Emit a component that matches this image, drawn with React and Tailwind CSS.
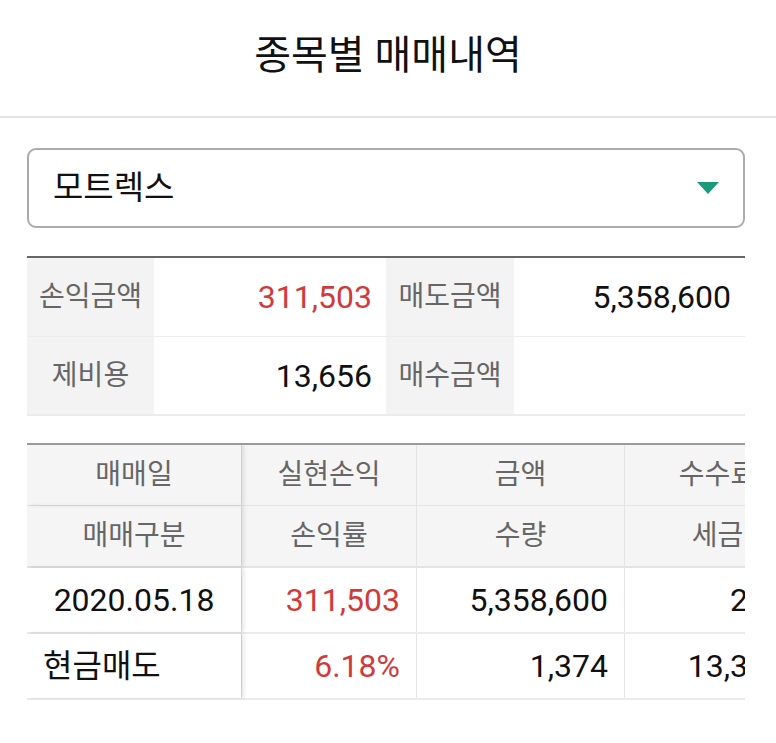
const FONT = "font-['Roboto','Noto_Sans_CJK_KR',sans-serif]";

const SUMMARY = [
  [
    { label: "손익금액", value: "311,503", red: true },
    { label: "매도금액", value: "5,358,600" },
  ],
  [
    { label: "제비용", value: "13,656" },
    { label: "매수금액", value: "" },
  ],
];

const COLS = [
  { top: "매매일", bottom: "매매구분", w: "w-[214px]" },
  { top: "실현손익", bottom: "손익률", w: "w-[175px]" },
  { top: "금액", bottom: "수량", w: "w-[208px]" },
  { top: "수수료", bottom: "세금", w: "w-[186px]" },
];

const TRADES = [
  {
    rows: [
      ["2020.05.18", "311,503", "5,358,600", "260"],
      ["현금매도", "6.18%", "1,374", "13,396"],
    ],
  },
];

function SummaryRow({ cells, last }) {
  return (
    <div className={`flex h-[79px] ${last ? "border-b-2" : "border-b"} border-[#ececec]`}>
      {cells.map((c, i) => (
        <div key={i} className="flex">
          <div
            className={`flex items-center justify-center bg-[#f3f3f3] text-[28px] text-[#666] ${
              i === 0 ? "w-[127px]" : "w-[128px]"
            }`}
          >
            {c.label}
          </div>
          <div
            className={`flex items-center justify-end pr-[14px] text-[32px] ${
              i === 0 ? "w-[232px]" : "w-[231px]"
            } ${c.red ? "text-[#d23a3a]" : "text-[#111]"}`}
          >
            {c.value}
          </div>
        </div>
      ))}
    </div>
  );
}

function HeaderCell({ children, col, first }) {
  return (
    <div
      className={`relative flex shrink-0 items-center justify-center text-[28px] text-[#666] ${col.w} ${
        first ? "z-10 shadow-[3px_0_4px_rgba(0,0,0,0.10)]" : "border-l border-[#e4e4e4]"
      }`}
    >
      {children}
    </div>
  );
}

export default function App() {
  return (
    <div className={`min-h-[743px] w-[776px] bg-white ${FONT}`}>
      <header className="flex h-[118px] items-center justify-center border-b-2 border-[#e3e3e3] pb-1">
        <h1 className="text-[40px] font-normal text-[#111]">종목별 매매내역</h1>
      </header>

      <div className="ml-[27px] w-[718px] pt-[30px]">
        <button className="flex h-[80px] w-full items-center justify-between rounded-[9px] border-2 border-[#ababab] pl-[24px] pr-[24px] text-left">
          <span className="text-[33px] text-[#111]">모트렉스</span>
          <svg width="22" height="12" viewBox="0 0 22 12">
            <path d="M0 0H22L11 12Z" fill="#1a9a7b" />
          </svg>
        </button>

        <div className="mt-[28px] border-t-2 border-[#666]">
          {SUMMARY.map((cells, i) => (
            <SummaryRow key={i} cells={cells} last={i === SUMMARY.length - 1} />
          ))}
        </div>

        <div className="mt-[27px] overflow-hidden border-t-2 border-[#9a9a9a]">
          <div className="w-max">
            <div className="flex h-[61px] border-b border-[#e4e4e4] bg-[#f5f5f5]">
              {COLS.map((c, i) => (
                <HeaderCell key={i} col={c} first={i === 0}>
                  {c.top}
                </HeaderCell>
              ))}
            </div>
            <div className="flex h-[62px] border-b-2 border-[#e4e4e4] bg-[#f5f5f5]">
              {COLS.map((c, i) => (
                <HeaderCell key={i} col={c} first={i === 0}>
                  {c.bottom}
                </HeaderCell>
              ))}
            </div>
            {TRADES.map((t, ti) =>
              t.rows.map((row, ri) => (
                <div key={`${ti}-${ri}`} className="flex h-[66px] border-b-2 border-[#ececec]">
                  {row.map((v, ci) => {
                    const col = COLS[ci];
                    let align = "justify-end pr-[16px]";
                    if (ci === 0) align = ri === 0 ? "justify-center" : "justify-start pl-[16px]";
                    if (ci === 3) align = "justify-end pr-[26px]";
                    const red = ci === 1;
                    return (
                      <div
                        key={ci}
                        className={`relative flex shrink-0 items-center text-[32px] ${col.w} ${align} ${
                          red ? "text-[#d23a3a]" : "text-[#111]"
                        } ${
                          ci === 0
                            ? "z-10 bg-white shadow-[3px_0_4px_rgba(0,0,0,0.10)]"
                            : "border-l border-[#e4e4e4]"
                        }`}
                      >
                        {v}
                      </div>
                    );
                  })}
                </div>
              ))
            )}
          </div>
        </div>
      </div>
    </div>
  );
}
